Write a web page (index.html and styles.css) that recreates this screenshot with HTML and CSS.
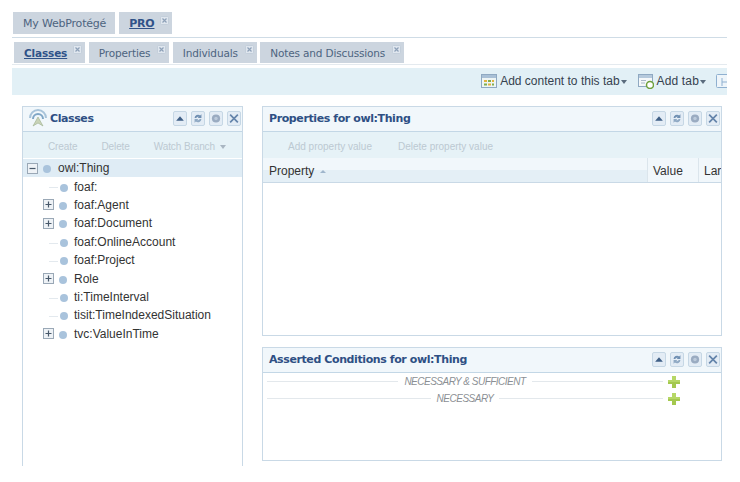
FILE: index.html
```html
<!DOCTYPE html>
<html lang="en">

<head>
    <meta charset="UTF-8">
    <meta name="viewport" content="width=device-width, initial-scale=1.0">
    <title>WebProtégé</title>
    <link rel="stylesheet" href="styles.css">
</head>

<body>
    <svg class="sprites" width="0" height="0">
        <symbol id="i-up" viewBox="0 0 14 14"><path d="M2.500 9.500 7 4.500l4.500 5z" fill="#3f5f86"/></symbol>
        <symbol id="i-sync" viewBox="0 0 14 14"><path d="M3 6.500a4 4 0 0 1 6.500-3L11 2v4.500H6.500L8 5a2.500 2.500 0 0 0-3 1.500z" fill="#6f8fb2"/><path d="M11 7.500a4 4 0 0 1-6.500 3L3 12V7.500h4.500L6 9a2.500 2.500 0 0 0 3-1.500z" fill="#8fa9c4"/></symbol>
        <symbol id="i-gear" viewBox="0 0 14 14"><circle cx="7" cy="7" r="4.800" fill="#9aabc1"/><circle cx="7" cy="7" r="2" fill="#bccadb"/></symbol>
        <symbol id="i-close" viewBox="0 0 14 14"><path d="M2.500 2.500l9 9M11.500 2.500l-9 9" stroke="#6484ab" stroke-width="2"/></symbol>
        <symbol id="i-x" viewBox="0 0 9 9"><rect x=".5" y=".5" width="8" height="8" rx="1" fill="#dfe6ee" stroke="#c3ceda"/><path d="M2.500 2.500l4 4M6.500 2.500l-4 4" stroke="#8ea1b8" stroke-width="1.200"/></symbol>
        <symbol id="i-plus" viewBox="0 0 11 11"><rect x=".5" y=".5" width="10" height="10" fill="#eef2f6" stroke="#9aa8b6"/><path d="M2.500 5.500h6M5.500 2.500v6" stroke="#47586a" stroke-width="1.200"/></symbol>
        <symbol id="i-minus" viewBox="0 0 11 11"><rect x=".5" y=".5" width="10" height="10" fill="#eef2f6" stroke="#9aa8b6"/><path d="M2.500 5.500h6" stroke="#47586a" stroke-width="1.200"/></symbol>
        <symbol id="i-add" viewBox="0 0 14 14"><path d="M5 1h4v4h4v4H9v4H5V9H1V5h4z" fill="#a4c84e"/><path d="M5 1h4v4h4v2H1V5h4z" fill="#b6d766"/></symbol>
    </svg>

    <div class="app">
        <!-- Project tabs -->
        <div class="tabs tabs-project">
            <div class="tab">My WebProtégé</div>
            <div class="tab tab-active">PRO <svg class="tab-x"><use href="#i-x"/></svg></div>
        </div>

        <!-- Ontology tabs -->
        <div class="tabs tabs-view">
            <div class="tab tab-active">Classes <svg class="tab-x"><use href="#i-x"/></svg></div>
            <div class="tab">Properties <svg class="tab-x"><use href="#i-x"/></svg></div>
            <div class="tab">Individuals <svg class="tab-x"><use href="#i-x"/></svg></div>
            <div class="tab">Notes and Discussions <svg class="tab-x"><use href="#i-x"/></svg></div>
        </div>

        <div class="tab-toolbar">
            <svg class="tool-icon" viewBox="0 0 16 16">
                <rect x=".5" y="1.500" width="15" height="13" fill="#eef5f4" stroke="#8fa9c2"/>
                <rect x="1" y="2" width="14" height="3" fill="#a9c0d6"/>
                <rect x="3" y="7" width="3" height="2" fill="#e3b23c"/><rect x="7" y="7" width="3" height="2" fill="#7fae4e"/><rect x="11" y="7" width="2" height="2" fill="#e3b23c"/>
                <rect x="3" y="10.500" width="3" height="2" fill="#7fae4e"/><rect x="7" y="10.500" width="3" height="2" fill="#e3b23c"/><rect x="11" y="10.500" width="2" height="2" fill="#7fae4e"/>
            </svg>
            <span class="tool-label">Add content to this tab</span><span class="tool-arrow"></span>
            <svg class="tool-icon tool-gap" viewBox="0 0 16 16">
                <rect x=".5" y="1.500" width="14" height="12" fill="#f5f8fa" stroke="#8fa9c2"/>
                <rect x="1" y="2" width="13" height="3" fill="#b5c9dc"/>
                <path d="M3 7.500h5M3 10h4" stroke="#a9b8c8"/>
                <circle cx="12" cy="12" r="3.500" fill="#fff" stroke="#6ea03c" stroke-width="1.500"/>
            </svg>
            <span class="tool-label tool-label-tab">Add tab</span><span class="tool-arrow"></span>
            <svg class="tool-icon tool-last" viewBox="0 0 16 16">
                <rect x=".5" y="1.500" width="13" height="13" rx="1" fill="#eef5fa" stroke="#8fb0d0"/>
                <path d="M6 5v8M6 9h7" stroke="#8fb0d0"/>
            </svg>
        </div>

        <div class="content">
            <!-- Class tree -->
            <section class="panel panel-tree">
                <header class="panel-head">
                    <svg class="classes-icon" viewBox="0 0 20 20">
                        <path d="M2 10a8 8 0 0 1 16 0" fill="none" stroke="#a9c4da" stroke-width="2"/>
                        <path d="M5 11a5 5 0 0 1 10 0" fill="none" stroke="#7fa6c6" stroke-width="2"/>
                        <path d="M10 9l-5 9 5-3 5 3z" fill="#c9d3b8" stroke="#9cae8c" stroke-width=".6"/>
                    </svg>
                    <h2 class="panel-title">Classes</h2>
                    <div class="panel-tools">
                        <span class="tool-btn"><svg><use href="#i-up"/></svg></span>
                        <span class="tool-btn"><svg><use href="#i-sync"/></svg></span>
                        <span class="tool-btn"><svg><use href="#i-gear"/></svg></span>
                        <span class="tool-btn"><svg><use href="#i-close"/></svg></span>
                    </div>
                </header>
                <div class="panel-bar panel-bar-tree">
                    <span>Create</span><span>Delete</span><span>Watch Branch &nbsp;<i class="bar-arrow"></i></span>
                </div>
                <ul class="tree">
                    <li class="node node-root"><svg class="exp"><use href="#i-minus"/></svg><i class="dot"></i>owl:Thing</li>
                    <li class="node leaf"><i class="dot"></i>foaf:</li>
                    <li class="node"><svg class="exp"><use href="#i-plus"/></svg><i class="dot"></i>foaf:Agent</li>
                    <li class="node"><svg class="exp"><use href="#i-plus"/></svg><i class="dot"></i>foaf:Document</li>
                    <li class="node leaf"><i class="dot"></i>foaf:OnlineAccount</li>
                    <li class="node leaf"><i class="dot"></i>foaf:Project</li>
                    <li class="node"><svg class="exp"><use href="#i-plus"/></svg><i class="dot"></i>Role</li>
                    <li class="node leaf"><i class="dot"></i>ti:TimeInterval</li>
                    <li class="node leaf"><i class="dot"></i>tisit:TimeIndexedSituation</li>
                    <li class="node"><svg class="exp"><use href="#i-plus"/></svg><i class="dot"></i>tvc:ValueInTime</li>
                </ul>
            </section>

            <div class="right-col">
                <!-- Properties -->
                <section class="panel panel-props">
                    <header class="panel-head">
                        <h2 class="panel-title">Properties for owl:Thing</h2>
                        <div class="panel-tools">
                            <span class="tool-btn"><svg><use href="#i-up"/></svg></span>
                            <span class="tool-btn"><svg><use href="#i-sync"/></svg></span>
                            <span class="tool-btn"><svg><use href="#i-gear"/></svg></span>
                            <span class="tool-btn"><svg><use href="#i-close"/></svg></span>
                        </div>
                    </header>
                    <div class="panel-bar panel-bar-props">
                        <span>Add property value</span><span>Delete property value</span>
                    </div>
                    <div class="grid-head">
                        <div class="col col-prop">Property <i class="sort"></i></div>
                        <div class="col col-value">Value</div>
                        <div class="col col-lang">Lar</div>
                    </div>
                </section>

                <!-- Conditions -->
                <section class="panel panel-cond">
                    <header class="panel-head">
                        <h2 class="panel-title">Asserted Conditions for owl:Thing</h2>
                        <div class="panel-tools">
                            <span class="tool-btn"><svg><use href="#i-up"/></svg></span>
                            <span class="tool-btn"><svg><use href="#i-sync"/></svg></span>
                            <span class="tool-btn"><svg><use href="#i-gear"/></svg></span>
                            <span class="tool-btn"><svg><use href="#i-close"/></svg></span>
                        </div>
                    </header>
                    <div class="cond-row"><span class="cond-label">NECESSARY &amp; SUFFICIENT</span><svg class="cond-add"><use href="#i-add"/></svg></div>
                    <div class="cond-row"><span class="cond-label">NECESSARY</span><svg class="cond-add"><use href="#i-add"/></svg></div>
                </section>
            </div>
        </div>
    </div>
</body>

</html>
```

FILE: styles.css
```css
html,
body {
    margin: 0;
    height: 482px;
    overflow: hidden;
    background-color: #fff;
}

.sprites {
    display: block;
    height: 0;
}

.app {
    width: 715px;
    margin-left: 12px;
    padding-top: 12px;
    font-family: "Liberation Sans", Arial, sans-serif;
    color: #333;
}

/* Tabs */
.tabs {
    display: flex;
    font-family: "DejaVu Sans", sans-serif;
    color: #4d6480;
}

.tabs-project {
    gap: 4px;
    height: 25px;
    padding-left: 1px;
    border-bottom: 1px solid #cfdce6;
    font-size: 11px;
    letter-spacing: -0.2px;
}

.tabs-project .tab {
    height: 22px;
}

.tabs-view {
    gap: 3.500px;
    height: 21px;
    margin-top: 4px;
    padding-left: 2px;
    padding-bottom: 1px;
    border-bottom: 1px solid #e4eaef;
    font-size: 10.500px;
    letter-spacing: -0.150px;
}

.tab {
    display: flex;
    align-items: center;
    padding: 0 3px 0 10px;
    background-color: #ccd5df;
}

.tabs-project .tab:first-child {
    padding-right: 9px;
}

.tab-active {
    font-weight: bold;
    color: #2f5288;
    text-decoration: underline;
}

.tab-x {
    width: 9px;
    height: 9px;
    margin: -6px 0 0 7px;
}

.tab-active .tab-x {
    margin-left: 6px;
}

.tab-toolbar {
    display: flex;
    align-items: center;
    justify-content: flex-end;
    box-sizing: border-box;
    height: 27px;
    margin-top: 3px;
    padding-bottom: 1px;
    background-color: #e2f0f6;
    overflow: hidden;
    font-size: 12px;
    color: #36424f;
}

.tool-icon {
    flex: none;
    width: 16px;
    height: 16px;
}

.tool-label {
    margin-left: 3px;
}

.tool-label-tab {
    letter-spacing: 0.150px;
}

.tool-arrow {
    width: 0;
    height: 0;
    margin: 2px 0 0 1px;
    border: 3px solid transparent;
    border-top: 4px solid #5a6b7d;
    border-bottom: 0;
}

.tool-gap {
    margin-left: 11px;
}

.tool-last {
    margin: 0 -5px 0 10px;
}

/* Panels */
.content {
    display: flex;
    gap: 19px;
    align-items: flex-start;
    margin: 11px 0 0 10px;
}

.panel {
    box-sizing: border-box;
    border: 1px solid #c9d9e6;
    background-color: #fff;
}

.panel-tree {
    width: 221px;
    height: 360px;
    border-bottom: 0;
}

.right-col {
    display: flex;
    flex-direction: column;
    gap: 11px;
    width: 460px;
}

.panel-props {
    height: 230px;
}

.panel-cond {
    height: 114px;
}

.panel-head {
    display: flex;
    align-items: center;
    height: 22px;
    padding: 0 0 2px 6px;
    background-color: #f1f7fb;
    border-bottom: 1px solid #c3d7e6;
}

.panel-title {
    margin: 0;
    font-family: "DejaVu Sans", sans-serif;
    font-size: 11px;
    letter-spacing: -0.400px;
    font-weight: bold;
    color: #2e4f84;
}

.classes-icon {
    width: 20px;
    height: 20px;
    margin: 0 2px 0 -1px;
}

.panel-tools {
    display: flex;
    gap: 4px;
    margin-left: auto;
    padding-right: 1px;
}

.tool-btn {
    box-sizing: border-box;
    width: 14px;
    height: 15px;
    border: 1px solid #c6d7e5;
    border-radius: 2px;
    background-color: #e3ecf5;
}

.tool-btn svg {
    display: block;
    width: 12px;
    height: 13px;
}

.panel-bar {
    display: flex;
    align-items: center;
    box-sizing: border-box;
    height: 26px;
    padding-top: 2px;
    background-color: #e6f2f7;
    font-size: 10px;
    color: #bcc9d2;
}

.panel-bar-tree {
    gap: 24px;
    padding-left: 25px;
    letter-spacing: -0.1px;
}

.panel-bar-props {
    gap: 26px;
    padding-left: 25px;
}

.bar-arrow {
    display: inline-block;
    margin-bottom: 1px;
    border: 3px solid transparent;
    border-top: 4px solid #a9b6c2;
    border-bottom: 0;
}

/* Tree */
.tree {
    margin: 0;
    padding: 1px 0 0;
    list-style: none;
    font-size: 12px;
    color: #333;
}

.node {
    display: flex;
    align-items: center;
    height: 18.400px;
    padding-left: 20px;
}

.node-root {
    padding-left: 4px;
    background-color: #dfecf5;
}

.exp {
    flex: none;
    width: 11px;
    height: 11px;
    margin-right: 5px;
}

.dot {
    flex: none;
    width: 8px;
    height: 8px;
    margin: 2px 6px 0 0;
    border-radius: 50%;
    background-color: #a9c3dc;
}

.node:not(.leaf) .dot {
    margin-right: 7px;
}

.node-root .dot {
    margin-right: 6px;
}

.leaf {
    padding-left: 37px;
    background: linear-gradient(#e3e9ee, #e3e9ee) no-repeat 26px 10px / 9px 1px;
}

/* Property grid */
.grid-head {
    display: flex;
    height: 24px;
    font-size: 12px;
    line-height: 26px;
    background: linear-gradient(#f1f7fb 50%, #e4eff6 50%);
    border-bottom: 1px solid #c9d9e6;
    overflow: hidden;
}

.col {
    box-sizing: border-box;
    padding-left: 5px;
    white-space: nowrap;
}

.col-prop {
    width: 384px;
    padding-left: 6px;
}

.col-value {
    width: 51px;
    background: #f1f7fb;
    border-left: 1px solid #dbe5ec;
}

.col-lang {
    width: 23px;
    background: #f1f7fb;
    border-left: 1px solid #dbe5ec;
}

.sort {
    display: inline-block;
    margin: 0 0 2px 2px;
    border: 3px solid transparent;
    border-bottom: 3px solid #9fb6cc;
    border-top: 0;
}

/* Conditions */
.cond-row {
    display: flex;
    align-items: center;
    height: 17px;
    margin-left: 4px;
    font-size: 10px;
    letter-spacing: -0.500px;
    font-style: italic;
    color: #8b8f94;
}

.cond-label {
    flex: 0 0 396px;
    display: flex;
    align-items: center;
    gap: 6px;
    white-space: nowrap;
}

.cond-label::before,
.cond-label::after {
    content: "";
    flex: 1;
    height: 1px;
    background-color: #e3e8ec;
}

.cond-add {
    width: 14px;
    height: 14px;
    margin-left: 4px;
}
```
